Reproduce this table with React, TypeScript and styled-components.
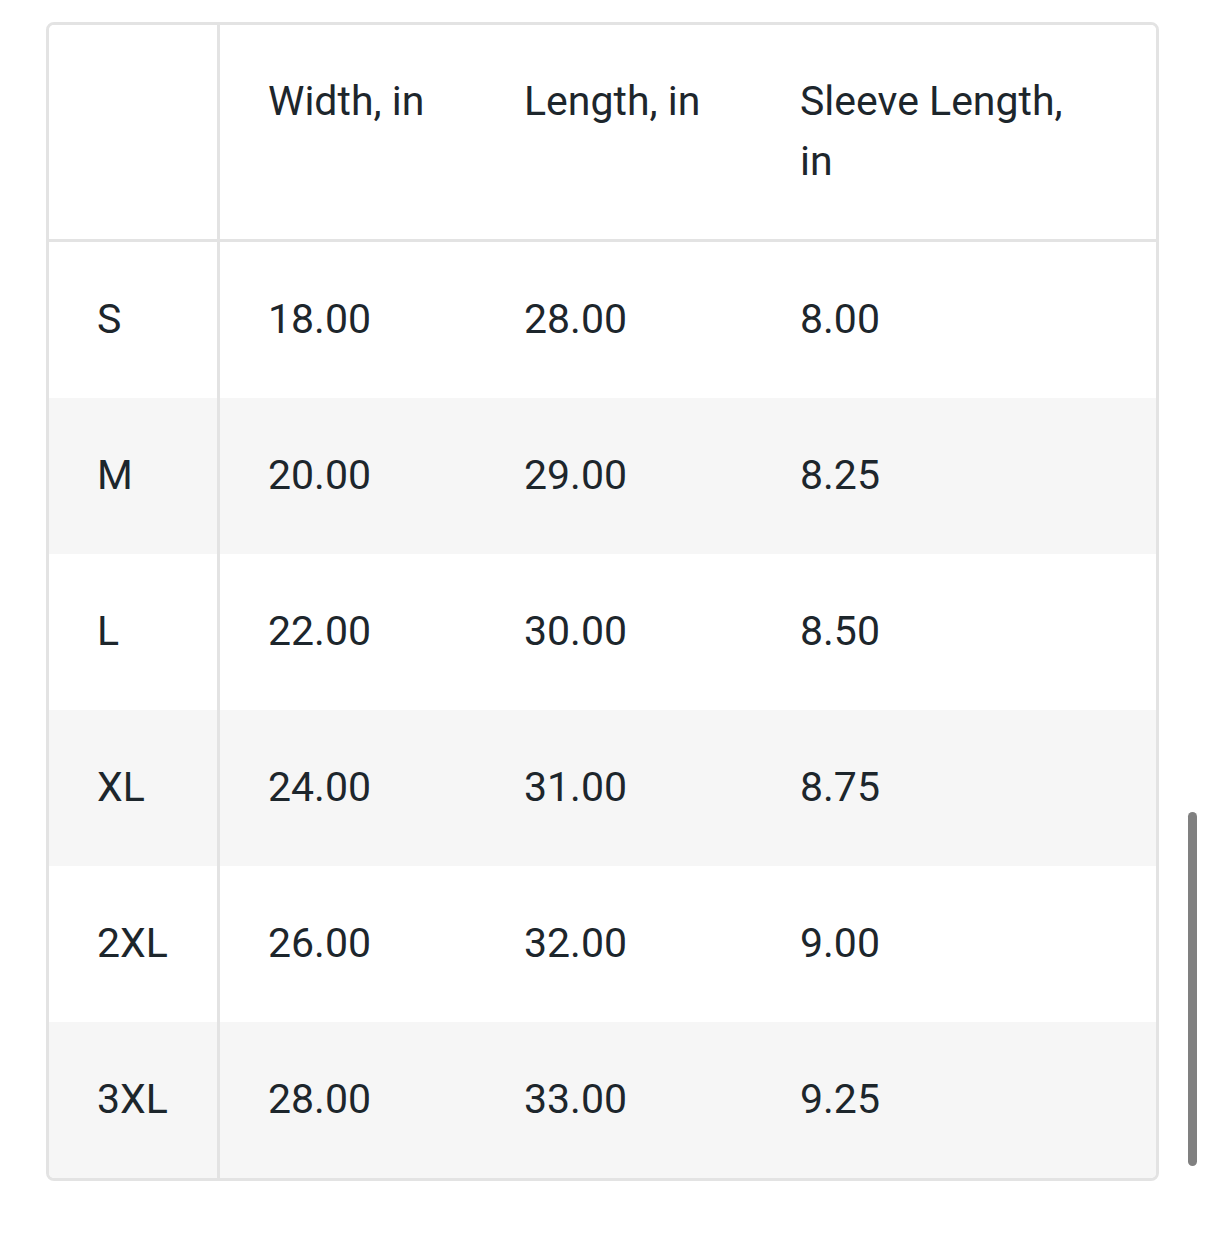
import React from "react";
import styled, { createGlobalStyle } from "styled-components";

const Global = createGlobalStyle`
  html, body { margin: 0; padding: 0; background: #ffffff; }
  body { font-family: Roboto, "Noto Sans", Arial, sans-serif; }
`;

const Page = styled.div`
  position: relative;
  width: 1206px;
  height: 1250px;
  padding: 22px 0 0 46px;
  box-sizing: border-box;
`;

const Table = styled.div`
  width: 1113px;
  border: 3px solid #e3e3e3;
  border-radius: 8px;
  box-sizing: border-box;
  overflow: hidden;
  display: grid;
  grid-template-columns: 168px 3px 256px 276px 404px;
`;

const Row = styled.div<{ $striped?: boolean; $head?: boolean }>`
  display: contents;
  & > * {
    background: ${(p) => (p.$striped ? "#f6f6f6" : "#ffffff")};
    ${(p) => (p.$head ? "border-bottom: 3px solid #e3e3e3;" : "")}
  }
`;

const Cell = styled.div<{ $head?: boolean }>`
  padding: ${(p) => (p.$head ? "46px 48px 48px 48px" : "47px 48px 49px 48px")};
  font-size: 41px;
  line-height: 60px;
  color: #1d262c;
  white-space: normal;
  display: flex;
  align-items: flex-start;
`;

const Label = styled.span`
  max-width: 285px;
`;

const Divider = styled.div`
  && {
    background: #e3e3e3;
  }
`;

const Scrollbar = styled.div`
  position: absolute;
  left: 1188px;
  top: 812px;
  width: 9px;
  height: 354px;
  border-radius: 5px;
  background: #808080;
`;

const headers = ["Width, in", "Length, in", "Sleeve Length, in"];

const rows: [string, string, string, string][] = [
  ["S", "18.00", "28.00", "8.00"],
  ["M", "20.00", "29.00", "8.25"],
  ["L", "22.00", "30.00", "8.50"],
  ["XL", "24.00", "31.00", "8.75"],
  ["2XL", "26.00", "32.00", "9.00"],
  ["3XL", "28.00", "33.00", "9.25"],
];

export default function App() {
  return (
    <>
      <Global />
      <Page>
        <Table>
          <Row $head>
            <Cell $head />
            <Divider />
            {headers.map((h) => (
              <Cell $head key={h}>
                <Label>{h}</Label>
              </Cell>
            ))}
          </Row>
          {rows.map((r, i) => (
            <Row key={r[0]} $striped={i % 2 === 1}>
              <Cell>{r[0]}</Cell>
              <Divider />
              <Cell>{r[1]}</Cell>
              <Cell>{r[2]}</Cell>
              <Cell>{r[3]}</Cell>
            </Row>
          ))}
        </Table>
        <Scrollbar />
      </Page>
    </>
  );
}
